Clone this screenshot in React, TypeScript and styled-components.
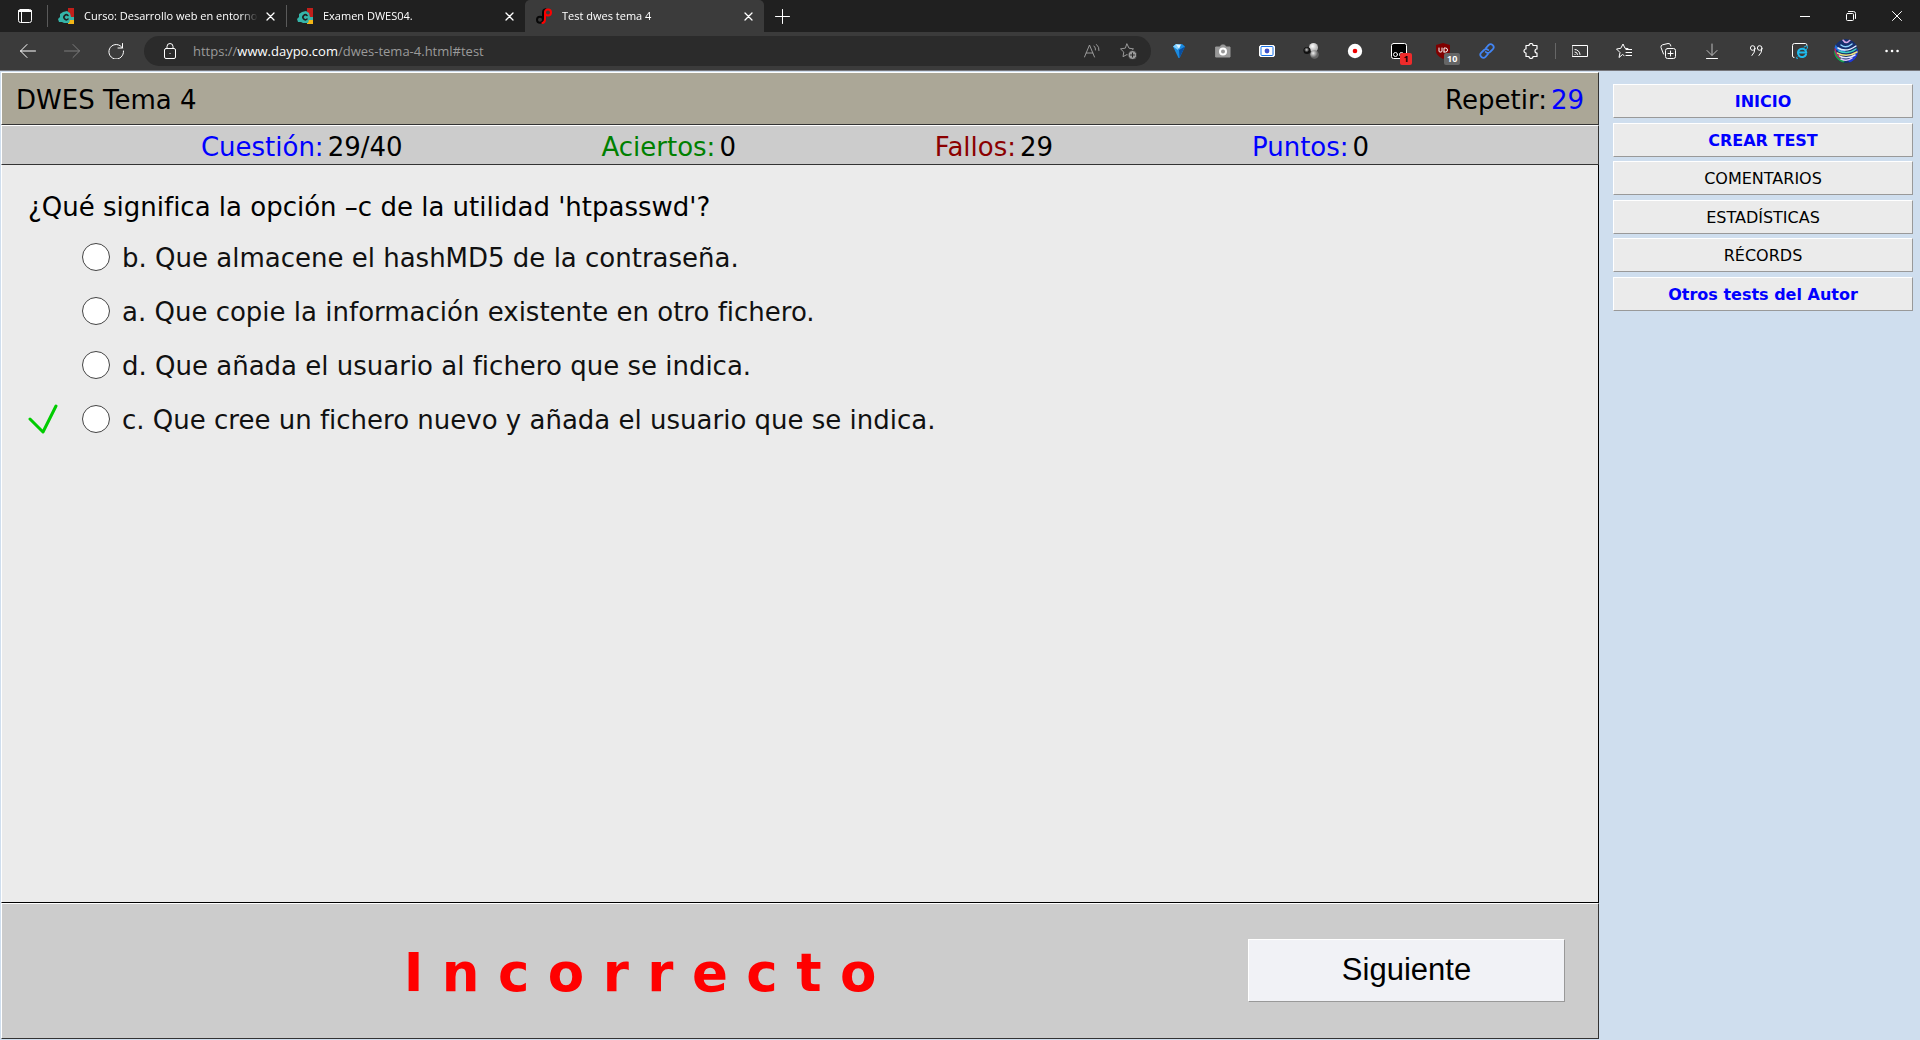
import React from "react";
import styled, { createGlobalStyle } from "styled-components";

const Global = createGlobalStyle`
  * { box-sizing: border-box; }
  html, body, #root { height: 100%; }
  body { margin: 0; background: #cfdeee; overflow: hidden; }
  button { font: inherit; color: inherit; padding: 0; border: 0; background: none; }
`;

const verdana = `Verdana, "DejaVu Sans", sans-serif`;
const ui = `"Segoe UI", "Open Sans", sans-serif`;

const Window = styled.div`
  display: flex;
  flex-direction: column;
  height: 100vh;
  font-family: ${verdana};
  font-variant-ligatures: none;
  color: #000;
`;

/* ---------- browser frame ---------- */

const TabBar = styled.div`
  display: flex;
  align-items: stretch;
  flex: none;
  height: 32px;
  padding-left: 2px;
  background: #202020;
  color: #fff;
  font: 11px/16px ${ui};
`;

const IconButton = styled.button<{ $w: number }>`
  display: flex;
  align-items: center;
  justify-content: center;
  flex: none;
  width: ${(p) => p.$w}px;
`;

const Tab = styled.div<{ $active?: boolean; $divider?: boolean }>`
  display: flex;
  align-items: center;
  flex: none;
  width: 239px;
  padding: 0 6px 0 10px;
  border-left: 1px solid transparent;
  ${(p) => p.$divider && `
    border-image: linear-gradient(transparent 6px, #5a5a5a 6px, #5a5a5a 26px, transparent 26px) 1;
  `}
  ${(p) => p.$active && `
    background: #3b3b3b;
    border-radius: 5px 5px 0 0;
  `}
  svg { flex: none; }
`;

const TabTitle = styled.span`
  flex: 1;
  margin-left: 10px;
  overflow: hidden;
  white-space: nowrap;
  mask-image: linear-gradient(to right, #000 156px, transparent 174px);
`;

const WindowControls = styled.div`
  display: flex;
  margin-left: auto;
`;

const Toolbar = styled.div`
  display: flex;
  align-items: center;
  flex: none;
  height: 39px;
  padding: 0 6px;
  background: #3b3b3b;
  border-bottom: 1px solid #77777c;
  color: #fff;
`;

const AddressBar = styled.label`
  display: flex;
  align-items: center;
  flex: 1;
  height: 30px;
  margin-left: 6px;
  padding: 0 5px 0 18px;
  border-radius: 15px;
  background: #2b2b2b;
  color: #9a9a9a;
  font: 13px/20px ${ui};
`;

const Url = styled.span`
  flex: 1;
  margin-left: 15px;
  white-space: nowrap;
  b { font-weight: 400; color: #fff; }
`;

const Extensions = styled.div`
  display: flex;
  align-items: center;
  align-self: stretch;
  margin-left: 6px;
  > button { height: 38px; }
`;

const Separator = styled.span`
  width: 1px;
  height: 16px;
  margin: 0 2px;
  background: #666;
`;

const BadgeHost = styled.span`
  position: relative;
  display: flex;
`;

const Badge = styled.span<{ $bg: string; $fg: string }>`
  position: absolute;
  left: 9px;
  top: 10px;
  min-width: 12px;
  padding: 0 3px;
  border-radius: 2px;
  background: ${(p) => p.$bg};
  color: ${(p) => p.$fg};
  font: 700 9px/12px ${ui};
`;

/* ---------- test page ---------- */

const Page = styled.div`
  display: flex;
  flex: 1;
  min-height: 0;
  padding: 1px 7px 1px 1px;
  background: #cfdeee;
`;

const Main = styled.main`
  display: flex;
  flex-direction: column;
  flex: 1;
  font-size: 26px;
  line-height: 32px;
`;

const Panel = styled.section<{ $bg: string }>`
  background: ${(p) => p.$bg};
  border: 1px solid #333;
  border-top-color: #fff;
  border-left-color: #fff;
`;

const TitlePanel = styled(Panel)`
  display: flex;
  align-items: center;
  justify-content: space-between;
  height: 53px;
  padding: 2px 14px 0;
`;

const Title = styled.h1`
  margin: 0;
  font-size: 26px;
  font-weight: 400;
`;

const Stats = styled(Panel)`
  display: flex;
  justify-content: space-evenly;
  align-items: center;
  height: 40px;
  padding: 4px 30px 0 0;
`;

const Pair = styled.span<{ $label?: string; $value?: string }>`
  display: flex;
  gap: 4px;
  color: ${(p) => p.$value || "#000"};
  > span { color: ${(p) => p.$label || "#000"}; }
`;

const Question = styled.section`
  flex: 1;
  padding: 26px 26px 0;
  background: #ebebeb;
  border-left: 1px solid #fff;
  border-right: 1px solid #000;
  border-bottom: 1px solid #000;
`;

const Prompt = styled.p`
  margin: 0 0 7px;
`;

const Answer = styled.label`
  display: grid;
  grid-template-columns: 54px 28px 1fr;
  align-items: center;
  height: 54px;
  color: #111;
`;

const Text = styled.span`
  margin: 2px 0 0 12px;
`;

const Radio = styled.input`
  appearance: none;
  grid-column: 2;
  width: 28px;
  height: 28px;
  margin: 0;
  border: 1px solid #444;
  border-radius: 50%;
  background: #fff;
`;

const Result = styled(Panel)`
  display: flex;
  align-items: center;
  height: 136px;
  padding: 0 33px 2px 30px;
`;

const Verdict = styled.strong`
  flex: 1;
  padding-top: 6px;
  color: #f00;
  font-size: 53px;
  line-height: 64px;
  text-align: center;
`;

const NextButton = styled.button`
  width: 317px;
  height: 63px;
  border: 1px solid #999;
  border-top-color: #fff;
  border-left-color: #fff;
  background: #f1f2f6;
  font: 31px/34px Arial, "Liberation Sans", sans-serif;
`;

const Side = styled.nav`
  display: flex;
  flex-direction: column;
  justify-content: space-between;
  flex: none;
  width: 300px;
  height: 227px;
  margin: 12px 0 0 14px;
`;

const SideLink = styled.a<{ $strong?: boolean }>`
  display: block;
  height: 34px;
  border: 1px solid #999;
  border-top-color: #fff;
  border-left-color: #fff;
  background: #ebebeb;
  color: ${(p) => (p.$strong ? "#00f" : "#000")};
  font-size: 16px;
  line-height: 34px;
  font-weight: ${(p) => (p.$strong ? 700 : 400)};
  text-align: center;
  text-decoration: none;
`;

/* ---------- icons ---------- */

type IconProps = { children: React.ReactNode; size?: number; color?: string; width?: number };
const Icon = ({ children, size = 16, color = "currentColor", width = 1 }: IconProps) => (
  <svg width={size} height={size} viewBox={`0 0 ${size} ${size}`} fill="none" stroke={color}
    strokeWidth={width} strokeLinecap="round" strokeLinejoin="round" aria-hidden="true">
    {children}
  </svg>
);

const CourseLogo = () => (
  <Icon>
    <g stroke="none">
      <path d="M10 0h6v9h-6z" fill="#c11f1a" />
      <path d="M10 11h6v5h-6z" fill="#f3b616" />
      <path d="M2 6 5 4l4-1 3 2 1 4h3v3h-4l-1 3H6l-2-1H1l-1-3 2-2z" fill="#35b5a9" />
    </g>
    <path d="M10 7.500a2.400 2.400 0 1 0 0 3.500" stroke="#202020" strokeWidth="1.600" />
  </Icon>
);

const DaypoLogo = () => (
  <Icon width={2}>
    <circle cx="4" cy="11.800" r="3" stroke="#080808" />
    <path d="M7 12V4.500Q7 1.500 9.500 1.200" stroke="#080808" />
    <circle cx="12" cy="4.500" r="3" stroke="#f00" />
    <path d="M9 4.500V11q0 3.500-2.500 4" stroke="#f00" />
  </Icon>
);

const Close = () => <Icon size={9} width={1.3}><path d="M1 1l7 7M8 1L1 8" /></Icon>;

const star = "M7 1l2 4.200 4.500.700-3.300 3.200.8 4.600L7 11.500l-4 2.200.8-4.600L.5 5.900 5 5.200z";

const toolIcons: { label: string; art: React.ReactNode }[] = [
  {
    label: "Diamante",
    art: (
      <Icon>
        <g stroke="none">
          <path d="M2 3.500 5 1h6l3 2.500L8.500 15h-1z" fill="#1b8be0" />
          <path d="M2 3.500 5 1l3 1-1 5z" fill="#7fd0ff" />
          <path d="M14 3.500 8.500 15 8 7z" fill="#0a4fa0" />
          <path d="M5 1.500h5L8 6z" fill="#dff4ff" />
        </g>
      </Icon>
    ),
  },
  {
    label: "Captura",
    art: (
      <Icon>
        <path d="M1 4h4l1.500-2h3L11 4h4v10H1z" fill="#999" stroke="#999" />
        <circle cx="8" cy="8.500" r="3" stroke="#fff" strokeWidth="2" fill="#999" />
      </Icon>
    ),
  },
  {
    label: "Grabadora",
    art: (
      <Icon>
        <rect x="0.5" y="2.500" width="15" height="11" rx="1.500" fill="#fff" stroke="#fff" />
        <rect x="2" y="3.500" width="12" height="9" rx="1" stroke="#1a73e8" />
        <circle cx="8" cy="8" r="2.400" fill="#3f51c8" stroke="none" />
      </Icon>
    ),
  },
  {
    label: "Esferas",
    art: (
      <Icon>
        <defs>
          <radialGradient id="ball" cx="35%" cy="35%"><stop stopColor="#eee" /><stop offset="1" stopColor="#666" /></radialGradient>
          <radialGradient id="light" cx="40%" cy="35%"><stop stopColor="#fff" /><stop offset="1" stopColor="#bbb" /></radialGradient>
          <radialGradient id="dark" cx="45%" cy="40%"><stop stopColor="#ccc" /><stop offset="0.7" stopColor="#111" /></radialGradient>
        </defs>
        <g stroke="none">
          <circle cx="10.500" cy="4.500" r="4.500" fill="url(#light)" />
          <circle cx="11.500" cy="11.500" r="4.300" fill="url(#ball)" />
          <circle cx="4" cy="7.500" r="3.600" fill="url(#dark)" />
        </g>
      </Icon>
    ),
  },
  {
    label: "Grabar",
    art: <Icon><circle cx="8" cy="8" r="7.200" fill="#fff" stroke="none" /><circle cx="8" cy="8" r="2.300" fill="#e00" stroke="none" /></Icon>,
  },
  {
    label: "Tampermonkey",
    art: (
      <BadgeHost>
        <Icon>
          <rect x="0.5" y="0.5" width="15" height="15" rx="2" fill="#000" stroke="#fff" />
          <circle cx="4.500" cy="11.500" r="2" stroke="#fff" /><circle cx="10.500" cy="11.500" r="2" stroke="#fff" />
        </Icon>
        <Badge $bg="#ee2b2b" $fg="#100">1</Badge>
      </BadgeHost>
    ),
  },
  {
    label: "uBlock",
    art: (
      <BadgeHost>
        <Icon>
          <path d="M8 0 15 2v6c0 4-4 6-7 8-3-2-7-4-7-8V2z" fill="#800000" stroke="none" />
          <path d="M4 5v3q0 1 1 1h1q1 0 1-1V5M9 9V5h1.500a2 2 0 0 1 0 4H9" stroke="#fff" />
        </Icon>
        <Badge $bg="#666" $fg="#fff">10</Badge>
      </BadgeHost>
    ),
  },
  {
    label: "Enlaces",
    art: (
      <Icon color="#4285f4" width={1.8}>
        <path d="M7 5l2.500-2.800a2.900 2.900 0 0 1 4.200 4.200L11 9a2.900 2.900 0 0 1-4.200 0M9 11l-2.500 2.800a2.900 2.900 0 0 1-4.200-4.200L5 7a2.900 2.900 0 0 1 4.200 0" />
      </Icon>
    ),
  },
  {
    label: "Extensiones",
    art: <Icon width={1.2}><path d="M3 2.500h3a2 2 0 0 1 4 0h4V6a1.900 1.900 0 0 0 0 4v3.500h-4a2 2 0 0 1-4 0H3V10a2 2 0 0 1 0-4z" /></Icon>,
  },
];

const edgeIcons: { label: string; art: React.ReactNode }[] = [
  {
    label: "Transmitir",
    art: <Icon><path d="M.5 2.500h15v11H.5zM3 11.500h.1M3 9a2.500 2.500 0 0 1 2.500 2.500M3 6.500a5 5 0 0 1 5 5" /></Icon>,
  },
  {
    label: "Favoritos",
    art: <Icon><path d="M8 12.500 6.500 11.500 3 14.500l1-5L.5 6l4.300-.7L7 1l2 4.300 3 .3M10 6.500h6M10 9.500h6M10 12.500h6" /></Icon>,
  },
  {
    label: "Colecciones",
    art: <Icon><rect x="5.500" y="5.500" width="10" height="10" rx="2" /><path d="M10.500 8v5M8 10.500h5M3.500 11 1 4.500Q.5 2.500 2.500 1.800L8 .5q2-.3 2.500 1.500l.3 1" /></Icon>,
  },
  {
    label: "Descargas",
    art: <Icon><path d="M8 1v11M3 7.500l5 5 5-5" stroke="#bbb" /><path d="M2.500 15.500h11" /></Icon>,
  },
  {
    label: "Citas",
    art: <Icon><path d="M7 5a2.300 2.300 0 1 0-4.600 0A2.300 2.300 0 0 0 7 5q0 4.500-3 7.500M14 5a2.300 2.300 0 1 0-4.600 0A2.300 2.300 0 0 0 14 5q0 4.500-3 7.500" /></Icon>,
  },
  {
    label: "Modo Internet Explorer",
    art: (
      <Icon>
        <path d="M2 14.500Q.5 14.500.5 13V2.500Q.5.5 2.500.5h11q1.500 0 1.500 2" />
        <path d="M14 11.500a4.200 4.200 0 1 1 .3-2H7" stroke="#1ebbee" strokeWidth="2" />
        <path d="M5 14q-1.500 2 .5 1.500M12 4q3-2 3.500-.5T14 7" stroke="#1ebbee" />
      </Icon>
    ),
  },
];

const Avatar = () => (
  <Icon size={24} width={1.5}>
    <defs><clipPath id="face"><circle cx="12" cy="12" r="12" /></clipPath></defs>
    <g clipPath="url(#face)">
      <circle cx="12" cy="12" r="12" fill="#17306e" stroke="none" />
      <path d="M0 6q4 6 10 6" stroke="#1f6fe0" strokeWidth="3" />
      <path d="M0 13q4 8 9 9" stroke="#18a04a" strokeWidth="3" />
      <path d="M24 12q-3 8-8 10" stroke="#2038d0" strokeWidth="3" />
      <path d="M4 9q8 5 18-2" stroke="#e8f0ff" /><path d="M5 12q9 4 17-2" stroke="#3fd0c0" />
      <path d="M3 14q10 5 20-1" stroke="#f0e27a" /><path d="M5 17q8 4 16-1" stroke="#e4e8ff" />
      <path d="M7 6q5 4 11-1" stroke="#8fd4ff" /><path d="M9 1q3 5 7 0" stroke="#d8a8e8" />
      <path d="M7 20q6 3 11-1" stroke="#e0c8ff" /><path d="M1 10q1 6 5 9" stroke="#c02868" />
    </g>
  </Icon>
);

/* ---------- content ---------- */

const tabs = [
  { title: "Curso: Desarrollo web en entorno", logo: <CourseLogo />, divider: true },
  { title: "Examen DWES04.", logo: <CourseLogo />, divider: true },
  { title: "Test dwes tema 4", logo: <DaypoLogo />, active: true },
];

const stats = [
  { label: "Cuestión:", value: "29/40", color: "#00f" },
  { label: "Aciertos:", value: "0", color: "#008000" },
  { label: "Fallos:", value: "29", color: "#8b0000" },
  { label: "Puntos:", value: "0", color: "#00f" },
];

const answers = [
  { text: "b. Que almacene el hashMD5 de la contraseña." },
  { text: "a. Que copie la información existente en otro fichero." },
  { text: "d. Que añada el usuario al fichero que se indica." },
  { text: "c. Que cree un fichero nuevo y añada el usuario que se indica.", correct: true },
];

const links = [
  { text: "INICIO", strong: true },
  { text: "CREAR TEST", strong: true },
  { text: "COMENTARIOS" },
  { text: "ESTADÍSTICAS" },
  { text: "RÉCORDS" },
  { text: "Otros tests del Autor", strong: true },
];

export default function App() {
  return (
    <Window>
      <Global />
      <TabBar>
        <IconButton $w={45} aria-label="Acciones de pestaña">
          <Icon><rect x="1.500" y="1.500" width="13" height="13" rx="2" /><path d="M2 3h12" strokeWidth="2" /><path d="M4.500 4.500v10" /></Icon>
        </IconButton>
        {tabs.map((t) => (
          <Tab key={t.title} $active={t.active} $divider={t.divider}>
            {t.logo}
            <TabTitle>{t.title}</TabTitle>
            <IconButton $w={20} aria-label="Cerrar pestaña"><Close /></IconButton>
          </Tab>
        ))}
        <IconButton $w={36} aria-label="Nueva pestaña"><Icon><path d="M8.500 1.500v14M1.500 8.500h14" /></Icon></IconButton>
        <WindowControls>
          <IconButton $w={46} aria-label="Minimizar"><Icon size={10}><path d="M0 5.500h10" /></Icon></IconButton>
          <IconButton $w={46} aria-label="Restaurar"><Icon size={10}><rect x="0.5" y="2.500" width="7" height="7" rx="1" /><path d="M2.500.5h5q2 0 2 2v5" /></Icon></IconButton>
          <IconButton $w={46} aria-label="Cerrar"><Icon size={10}><path d="M.5.5l9 9M9.500.5l-9 9" /></Icon></IconButton>
        </WindowControls>
      </TabBar>
      <Toolbar>
        <IconButton $w={44} aria-label="Atrás"><Icon><path d="M15.500 8H.5M7 1.500.5 8 7 14.500" /></Icon></IconButton>
        <IconButton $w={44} aria-label="Adelante"><Icon color="#7d7d7d"><path d="M.5 8h15M9 1.500 15.500 8 9 14.500" /></Icon></IconButton>
        <IconButton $w={44} aria-label="Actualizar"><Icon><path d="M14.500 5A7.300 7.300 0 1 0 15.500 8M14.500.5V5H10" /></Icon></IconButton>
        <AddressBar>
          <Icon color="#fff"><rect x="2.500" y="5.500" width="11" height="10" rx="1.500" /><path d="M5 5.500V3.500a3 3 0 0 1 6 0v2M8 10.500h.1" /></Icon>
          <Url>https://<b>www.daypo.com</b>/dwes-tema-4.html#test</Url>
          <IconButton $w={36} aria-label="Leer en voz alta">
            <Icon color="#9a9a9a"><path d="M.5 14 5.500 2l5 12M2.200 10h6.600M10 3q2 2 1.500 4M12.500 1.500q3 2.500 2.500 6" /></Icon>
          </IconButton>
          <IconButton $w={36} aria-label="Agregar a favoritos">
            <Icon color="#9a9a9a" size={17}><path d={star} /><circle cx="12.500" cy="12" r="4.500" fill="#9a9a9a" stroke="#2b2b2b" /><path d="M12.500 10v4M10.500 12h4" stroke="#2b2b2b" /></Icon>
          </IconButton>
        </AddressBar>
        <Extensions>
          {toolIcons.map((i) => <IconButton $w={44} key={i.label} aria-label={i.label}>{i.art}</IconButton>)}
          <Separator />
          {edgeIcons.map((i) => <IconButton $w={44} key={i.label} aria-label={i.label}>{i.art}</IconButton>)}
          <IconButton $w={48} aria-label="Perfil"><Avatar /></IconButton>
          <IconButton $w={44} aria-label="Más">
            <Icon><path d="M2.500 8h.1M8 8h.1M13.500 8h.1" strokeWidth="2.500" /></Icon>
          </IconButton>
        </Extensions>
      </Toolbar>
      <Page>
        <Main>
          <TitlePanel $bg="#aba797" as="header">
            <Title>DWES Tema 4</Title>
            <Pair $value="#00f"><span>Repetir:</span>29</Pair>
          </TitlePanel>
          <Stats $bg="#ccc">
            {stats.map((s) => <Pair key={s.label} $label={s.color}><span>{s.label}</span>{s.value}</Pair>)}
          </Stats>
          <Question>
            <Prompt>¿Qué significa la opción –c de la utilidad 'htpasswd'?</Prompt>
            {answers.map((a) => (
              <Answer key={a.text}>
                {a.correct && <Icon size={32} color="#0c0" width={3}><path d="M2 16l13 13L28 3" /></Icon>}
                <Radio type="radio" name="respuesta" />
                <Text>{a.text}</Text>
              </Answer>
            ))}
          </Question>
          <Result $bg="#ccc">
            <Verdict>I n c o r r e c t o</Verdict>
            <NextButton>Siguiente</NextButton>
          </Result>
        </Main>
        <Side>
          {links.map((l) => <SideLink href="#" key={l.text} $strong={l.strong}>{l.text}</SideLink>)}
        </Side>
      </Page>
    </Window>
  );
}
